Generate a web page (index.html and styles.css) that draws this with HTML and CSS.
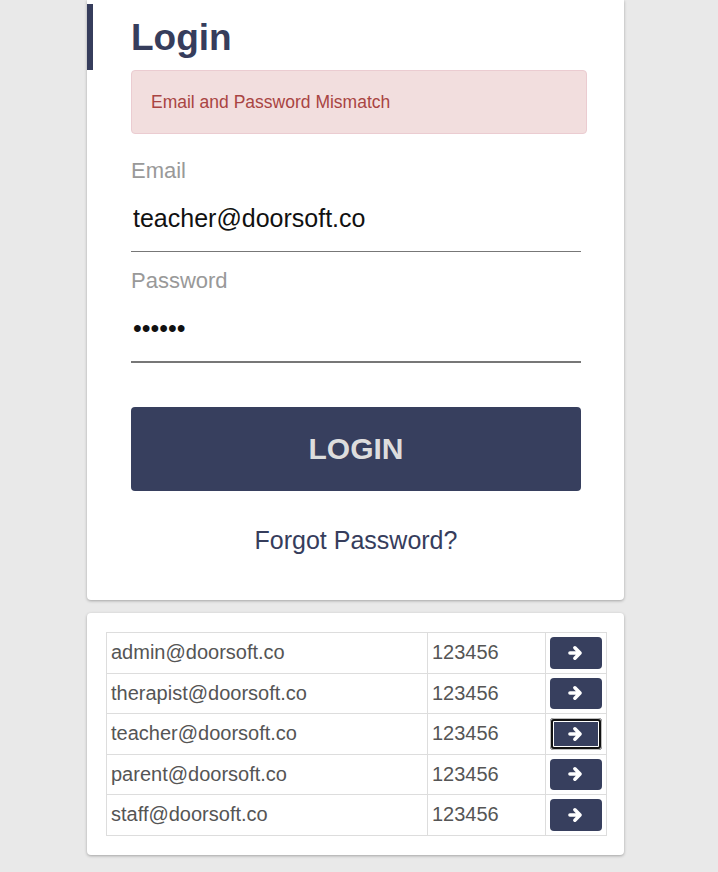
FILE: index.html
```html
<!DOCTYPE html>
<html lang="en">
<head>
<meta charset="utf-8">
<title>Login</title>
<link rel="stylesheet" href="styles.css">
</head>
<body>
<div class="page">
  <div class="card login-card">
    <h1 class="title">Login</h1>
    <div class="alert">Email and Password Mismatch</div>
    <form class="form">
      <label class="label label-first" for="email">Email</label>
      <input class="input" id="email" type="text" value="teacher@doorsoft.co">
      <label class="label label-second" for="pw">Password</label>
      <input class="input input-active" id="pw" type="password" value="123456">
      <button class="login-btn" type="button">LOGIN</button>
      <div class="forgot">Forgot Password?</div>
    </form>
  </div>

  <div class="card accounts-card">
    <table class="accounts">
      <colgroup><col class="c1"><col class="c2"><col class="c3"></colgroup>
      <tr><td>admin@doorsoft.co</td><td>123456</td><td class="act"><button class="go" type="button"><svg viewBox="0 0 12 13" class="arrow"><path d="M1.5 6.5H9M5.5 2.3L9.7 6.5 5.5 10.7"/></svg></button></td></tr>
      <tr><td>therapist@doorsoft.co</td><td>123456</td><td class="act"><button class="go" type="button"><svg viewBox="0 0 12 13" class="arrow"><path d="M1.5 6.5H9M5.5 2.3L9.7 6.5 5.5 10.7"/></svg></button></td></tr>
      <tr><td>teacher@doorsoft.co</td><td>123456</td><td class="act"><button class="go go-focus" type="button"><svg viewBox="0 0 12 13" class="arrow"><path d="M1.5 6.5H9M5.5 2.3L9.7 6.5 5.5 10.7"/></svg></button></td></tr>
      <tr><td>parent@doorsoft.co</td><td>123456</td><td class="act"><button class="go" type="button"><svg viewBox="0 0 12 13" class="arrow"><path d="M1.5 6.5H9M5.5 2.3L9.7 6.5 5.5 10.7"/></svg></button></td></tr>
      <tr><td>staff@doorsoft.co</td><td>123456</td><td class="act"><button class="go" type="button"><svg viewBox="0 0 12 13" class="arrow"><path d="M1.5 6.5H9M5.5 2.3L9.7 6.5 5.5 10.7"/></svg></button></td></tr>
    </table>
  </div>
  <div class="bottom-line"></div>
</div>
</body>
</html>
```

FILE: styles.css
```css
* { box-sizing: border-box; }

html, body {
  margin: 0;
  padding: 0;
  background: #e9e9e9;
  font-family: "Liberation Sans", Arial, sans-serif;
}

.page {
  width: 537px;
  margin-left: 87px;
}

.card {
  background: #fff;
  border-radius: 4px;
  box-shadow: 0 1px 3px rgba(0, 0, 0, 0.3);
}

.login-card {
  border-radius: 0 0 4px 4px;
  padding: 4px 37px 46px 44px;
}

.title {
  margin: 0 0 0 -44px;
  border-left: 6px solid #363d5c;
  padding-left: 38px;
  height: 66px;
  line-height: 68px;
  font-size: 37px;
  font-weight: bold;
  color: #363d5c;
}

.alert {
  height: 64px;
  display: flex;
  align-items: center;
  padding: 0 19px;
  background: #f2dede;
  border: 1px solid #ebccd1;
  border-radius: 4px;
  color: #a94442;
  font-size: 17.5px;
}

.form {
  width: 450px;
}

.label {
  display: block;
  font-size: 22px;
  line-height: 25px;
  color: #999;
}

.label-first { margin-top: 24px; }
.label-second { margin-top: 16px; }

.input {
  display: block;
  width: 100%;
  height: 69px;
  padding: 3px 2px 0;
  border: 0;
  border-bottom: 1px solid #777;
  background: transparent;
  font-family: "Liberation Sans", Arial, sans-serif;
  font-size: 25px;
  color: #111;
  outline: none;
}

.input-active {
  height: 70px;
  border-bottom: 2px solid #777;
}

.login-btn {
  display: block;
  width: 100%;
  height: 84px;
  margin-top: 44px;
  border: 0;
  border-radius: 4px;
  background: #373f5e;
  color: #ddd;
  font-family: "Liberation Sans", Arial, sans-serif;
  font-size: 30px;
  font-weight: bold;
}

.forgot {
  margin-top: 35px;
  text-align: center;
  font-size: 25px;
  line-height: 28px;
  color: #363d5c;
}

.accounts-card {
  margin-top: 13px;
  padding: 19px 18px 19px 19px;
}

.accounts {
  width: 100%;
  border-collapse: collapse;
  table-layout: fixed;
}

.c1 { width: 321px; }
.c2 { width: 118px; }
.c3 { width: 61px; }

.accounts td {
  border: 1px solid #ddd;
  padding: 4px;
  font-size: 20px;
  color: #555;
  vertical-align: middle;
  white-space: nowrap;
}

.go {
  display: flex;
  align-items: center;
  justify-content: center;
  width: 52px;
  height: 31.5px;
  padding: 0 2px 0 0;
  border: 0;
  border-radius: 4px;
  background: #373f5e;
}

.go-focus {
  box-shadow: inset 0 0 0 1px #bbb, inset 0 0 0 3px #111, inset 0 0 0 4px #fff;
}

.arrow {
  width: 15px;
  height: 16px;
  fill: none;
  stroke: #fff;
  stroke-width: 2.9;
  stroke-linecap: round;
  stroke-linejoin: round;
}

.bottom-line {
  margin-top: 17px;
  margin-left: -87px;
  width: 718px;
  height: 1px;
  background: #222;
}
```
